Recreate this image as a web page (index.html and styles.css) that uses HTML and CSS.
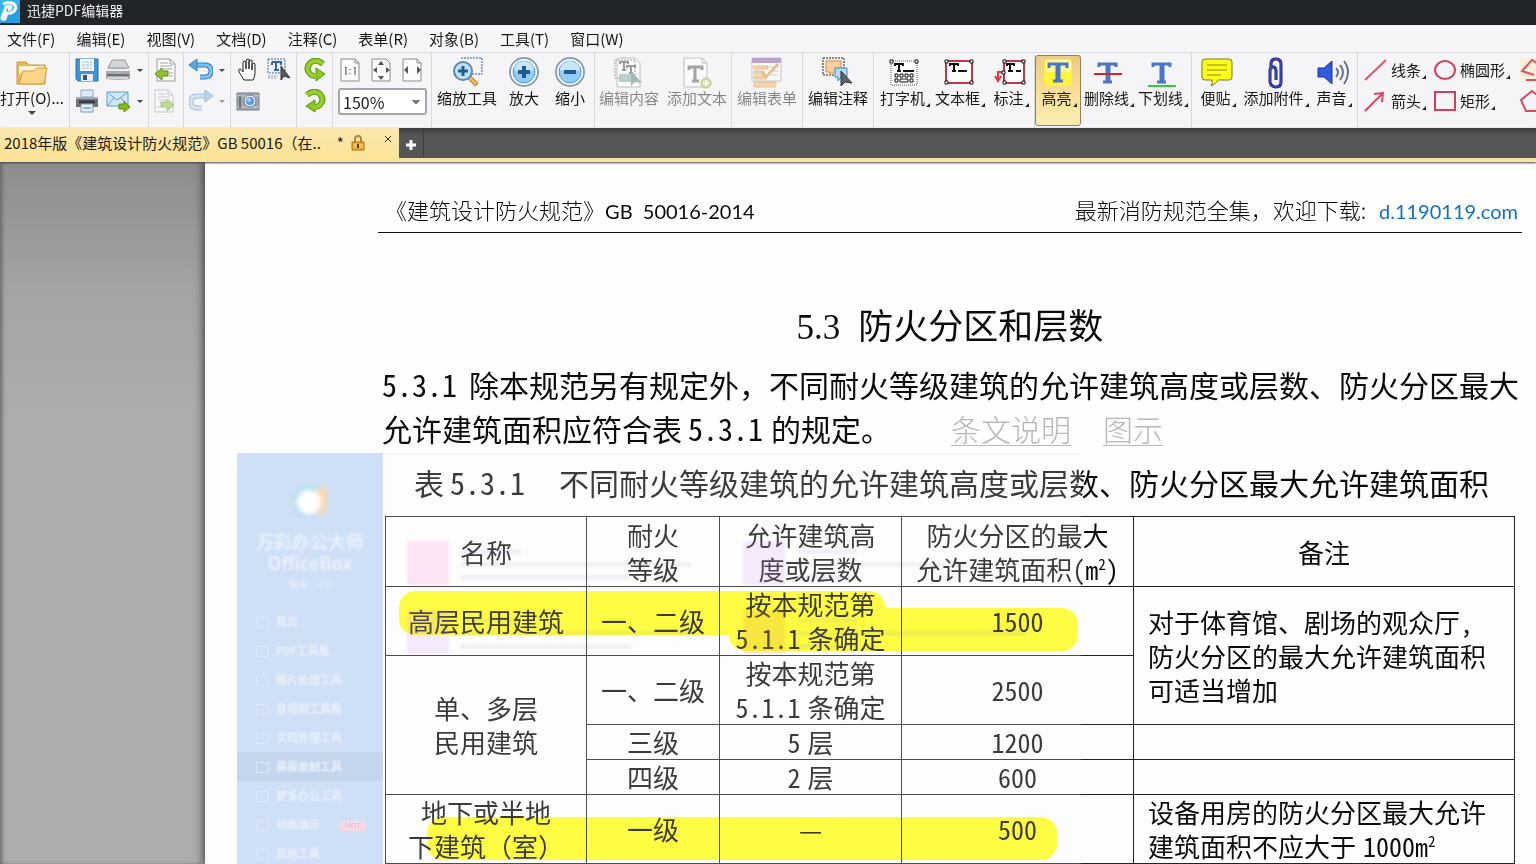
FILE: index.html
```html
<!DOCTYPE html>
<html lang="zh-CN">
<head>
<meta charset="utf-8">
<title>迅捷PDF编辑器</title>
<link rel="stylesheet" href="styles.css">
</head>
<body>
<header class="titlebar">
  <svg class="logo" viewBox="0 0 20 23"><rect width="20" height="23" fill="#35b4ee"/><path d="M0 23L20 3V23Z" fill="#249fe0"/><path d="M3 4Q9 1 14 4Q18 8 13 12Q10 14 7 13L5 19Q3 20 2 18L6 7Q10 5 11 7Q11 9 8 10" fill="none" stroke="#fff" stroke-width="3" stroke-linejoin="round"/></svg>
  <span>迅捷PDF编辑器</span>
</header>
<nav class="menubar">
  <button>文件(F)</button><button>编辑(E)</button><button>视图(V)</button><button>文档(D)</button><button>注释(C)</button><button>表单(R)</button><button>对象(B)</button><button>工具(T)</button><button>窗口(W)</button>
</nav>

<div class="toolbar">
  <div class="group g-open">
    <button class="tool">
      <svg class="icon" viewBox="0 0 32 32"><path d="M1 5h9l3 3h16v19H1z" fill="#e9b95c" stroke="#c99436"/><path d="M3 9h25v8H3z" fill="#fff3cf"/><path d="M3 27L7 14h11l3-3h10l-3 16z" fill="#fbd587" stroke="#cf9c42"/></svg>
      <span>打开(O)...</span><i class="drop"></i>
    </button>
  </div>
  <div class="group g-file">
    <button class="mini" aria-label="保存"><svg viewBox="0 0 24 24"><path d="M1 1h22v22H3l-2-2z" fill="#3d95d8" stroke="#2a72ae"/><path d="M5 1h14v12H5z" fill="#f4f9fd"/><path d="M7 4h10M7 7h10M7 10h10" stroke="#9db4c7" stroke-dasharray="3 1"/><path d="M6 16h12v7H6z" fill="#e6edf3"/><path d="M8 17h4v5H8z" fill="#3a556e"/></svg></button>
    <button class="mini" aria-label="扫描"><svg viewBox="0 0 24 24"><path d="M6 2h13l4 8H2z" fill="#d4d5d8" stroke="#96989c"/><path d="M0 11q12-3 24 0v10q-12 2-24 0z" fill="#a9abb0"/><path d="M0 12h24" stroke="#eee" stroke-width="2"/><path d="M1 17h22" stroke="#6c6e73" stroke-width="2"/><path d="M2 20h20" stroke="#d7d7d9" stroke-width="2"/></svg></button><i class="drop"></i>
    <button class="mini" aria-label="打印"><svg viewBox="0 0 24 24"><path d="M6 1h12v7H6z" fill="#d9edfb" stroke="#8fa4b5"/><path d="M1 8h22v10H1z" fill="#70747c"/><path d="M1 9h22" stroke="#a6abb2" stroke-width="2"/><path d="M4 13h16" stroke="#373a40" stroke-width="3"/><path d="M6 15h12v8H6z" fill="#e6f3fc" stroke="#8295a5"/><path d="M8 19h8" stroke="#79b7e6" stroke-width="2"/></svg></button>
    <button class="mini" aria-label="发送邮件"><svg viewBox="0 0 24 24"><path d="M1 3h21v14H1z" fill="#cfe8fb" stroke="#5c9fd4"/><path d="M1 3l10 8L22 3M1 17l7-8M22 17l-7-8" fill="none" stroke="#5c9fd4"/><path d="M13 15h5v-3l6 6-6 5v-3h-5z" fill="#84bc1c" stroke="#5c8c0c"/></svg></button><i class="drop"></i>
  </div>
  <div class="group g-pages">
    <button class="mini" aria-label="上一页"><svg viewBox="0 0 24 24"><path d="M4 1h13l5 5v17H4z" fill="#fafafa" stroke="#9c9c9c"/><path d="M17 1v5h5" fill="none" stroke="#9c9c9c"/><path d="M7 5h8M7 8h12M7 11h12M16 15h4M16 18h4" stroke="#a5a5a5"/><path d="M15 13v5H9v4l-7-6 7-6v3z" fill="#8fc42a" stroke="#5d8f10"/></svg></button>
    <button class="mini off" aria-label="下一页"><svg viewBox="0 0 24 24"><path d="M2 1h13l5 5v17H2z" fill="#fafafa" stroke="#9c9c9c"/><path d="M15 1v5h5" fill="none" stroke="#9c9c9c"/><path d="M5 5h8M5 8h12M5 11h8M4 18h4" stroke="#a5a5a5"/><path d="M8 13v5h6v4l7-6-7-6v3z" fill="#8fc42a" stroke="#5d8f10"/></svg></button>
  </div>
  <div class="group g-undo">
    <button class="mini" aria-label="撤销"><svg viewBox="0 0 24 24"><path d="M7 7h9q6 0 6 6t-6 6h-5" fill="none" stroke="#2f7fc4" stroke-width="5"/><path d="M7 7h9q6 0 6 6t-6 6h-5" fill="none" stroke="#7fc0f0" stroke-width="3"/><path d="M0 7l8-6v12z" fill="#5aa9e4" stroke="#2f7fc4"/></svg></button><i class="drop"></i>
    <button class="mini off" aria-label="重做"><svg viewBox="0 0 24 24"><path d="M17 7H8q-6 0-6 6t6 6h5" fill="none" stroke="#4d86b5" stroke-width="5"/><path d="M17 7H8q-6 0-6 6t6 6h5" fill="none" stroke="#b8d7ee" stroke-width="3"/><path d="M24 7l-8-6v12z" fill="#88b5d8" stroke="#4d86b5"/></svg></button><i class="drop off"></i>
  </div>
  <div class="group g-hand">
    <button class="mini" aria-label="手形工具"><svg viewBox="0 0 24 24"><path d="M8 22Q6 18 3 14Q2 11 4 11Q5 11 7 14V5Q7 3 8 3T10 5V11V3Q10 1 12 1T13 3V11V4Q13 2 15 2T16 4V12V7Q17 5 18 5T19 7V15Q19 19 17 22Z" fill="#fff" stroke="#222"/></svg></button>
    <button class="mini" aria-label="选择文本"><svg viewBox="0 0 24 24"><path d="M1 1h17v14H1z" fill="none" stroke="#3b6aa8" stroke-dasharray="2 1"/><path d="M5 4h9v3M9 4v8M7 12h5M5 4v3" stroke="#2968b0" stroke-width="2" fill="none"/><path d="M1 18h10M1 20h8" stroke="#999" stroke-dasharray="2 1"/><path d="M14 8v14l3-4 6 2z" fill="#555c64" stroke="#333"/></svg></button>
    <button class="mini" aria-label="快照"><svg viewBox="0 0 24 24"><path d="M1 4h22v17H1z" fill="#a2a6ad" stroke="#777b83"/><path d="M1 7h22M1 18h22" stroke="#cfd2d7"/><path d="M4 7v12" stroke="#6d727a" stroke-width="2"/><circle cx="14" cy="12" r="6" fill="#deebf7" stroke="#637f9c"/><circle cx="14" cy="12" r="4" fill="#5a98db"/><circle cx="13" cy="11" r="2" fill="#a6d0fa"/></svg></button>
  </div>
  <div class="group g-rotate">
    <button class="mini" aria-label="逆时针旋转"><svg viewBox="0 0 24 24"><path d="M20 6Q13 0 7 5Q2 11 7 16Q9 18 12 18" fill="none" stroke="#5e9410" stroke-width="6"/><path d="M13 10v13l9-7z" fill="#8ac71f" stroke="#5e9410"/><path d="M20 6Q13 0 7 5Q2 11 7 16Q9 18 13 18" fill="none" stroke="#97cf2c" stroke-width="4"/></svg></button>
    <button class="mini" aria-label="顺时针旋转"><svg viewBox="0 0 24 24"><path d="M4 6Q11 0 17 5Q22 11 17 16Q15 18 12 18" fill="none" stroke="#5e9410" stroke-width="6"/><path d="M12 11v12L3 17z" fill="#8ac71f" stroke="#5e9410"/><path d="M4 6Q11 0 17 5Q22 11 17 16Q15 18 11 18" fill="none" stroke="#97cf2c" stroke-width="4"/></svg></button>
  </div>
  <div class="group g-zoom">
    <div class="row">
      <button class="mini" aria-label="实际大小"><svg viewBox="0 0 24 24"><path d="M3 1h14l4 4v18H3z" fill="#fbfbfb" stroke="#8c8c8c"/><path d="M17 1v4h4" fill="none" stroke="#8c8c8c"/><path d="M7 10l1-1v8M16 10l1-1v8M12 11v1M12 15v1" fill="none" stroke="#444"/></svg></button>
      <button class="mini" aria-label="适合页面"><svg viewBox="0 0 24 24"><path d="M3 1h14l4 4v18H3z" fill="#fbfbfb" stroke="#8c8c8c"/><path d="M12 3l3 4H9zM12 22l3-4H9zM4 12l4-3v6zM21 12l-4-3v6z" fill="#555"/></svg></button>
      <button class="mini" aria-label="适合宽度"><svg viewBox="0 0 24 24"><path d="M3 1h14l4 4v18H3z" fill="#fbfbfb" stroke="#8c8c8c"/><path d="M17 1v4h4" fill="none" stroke="#8c8c8c"/><path d="M4 12l4-4v8zM21 12l-4-4v8z" fill="#555"/></svg></button>
    </div>
    <select class="zoom" aria-label="缩放比例"><option>150%</option><option>100%</option></select>
  </div>
  <div class="group">
    <button class="tool w70"><svg class="icon" viewBox="0 0 32 32"><path d="M10 1h21v16H20" fill="none" stroke="#4254b8" stroke-dasharray="2 1"/><path d="M18 20l8 8" stroke="#d58a2b" stroke-width="5"/><path d="M18 20l7 7" stroke="#fbc36a" stroke-width="2"/><circle cx="12" cy="14" r="9" fill="#bfe1fa" stroke="#5b86ae" stroke-width="2"/><path d="M12 9v10M7 14h10" stroke="#1f5c94" stroke-width="3"/></svg><span>缩放工具</span></button>
    <button class="tool w44"><svg class="icon" viewBox="0 0 32 32"><circle cx="16" cy="15" r="14" fill="#fff" stroke="#8aa0b5" stroke-width="2"/><circle cx="16" cy="15" r="11" fill="#8fcbf6" stroke="#5596cd"/><path d="M6 13a10 9 0 0 1 20 0q-10 4-20 0" fill="#c7e6fc"/><path d="M16 9v12M10 15h12" stroke="#22598d" stroke-width="4"/></svg><span>放大</span></button>
    <button class="tool w48"><svg class="icon" viewBox="0 0 32 32"><circle cx="16" cy="15" r="14" fill="#fff" stroke="#8aa0b5" stroke-width="2"/><circle cx="16" cy="15" r="11" fill="#8fcbf6" stroke="#5596cd"/><path d="M6 13a10 9 0 0 1 20 0q-10 4-20 0" fill="#c7e6fc"/><path d="M10 15h12" stroke="#22598d" stroke-width="4"/></svg><span>缩小</span></button>
  </div>
  <div class="group">
    <button class="tool w68 off" disabled><svg class="icon" viewBox="0 0 32 32"><path d="M4 1h18l5 5v24H4z" fill="#fff" stroke="#888"/><path d="M2 3h20v18H2z" fill="none" stroke="#555" stroke-dasharray="2 1"/><path d="M7 7V5h8v2M11 5v8M9 13h4M14 11V9h8v2M18 9v7M16 16h4" fill="none" stroke="#444" stroke-width="2"/><path d="M6 17h14v8H6z" fill="#79a8a1"/><path d="M18 14v15l4-4 7 1z" fill="#4f7d78"/></svg><span>编辑内容</span></button>
    <button class="tool w68 off" disabled><svg class="icon" viewBox="0 0 32 32"><path d="M3 1h18l5 5v24H3z" fill="#fff" stroke="#888"/><path d="M21 1v5h5" fill="none" stroke="#888"/><path d="M8 13v-3h13v3M14 10v14M11 24h7" fill="none" stroke="#555" stroke-width="3"/><circle cx="25" cy="26" r="5" fill="#b6cf58" stroke="#7c9924"/><path d="M25 23v6M22 26h6" stroke="#fff" stroke-width="2"/></svg><span>添加文本</span></button>
  </div>
  <div class="group">
    <button class="tool w70 off" disabled><svg class="icon" viewBox="0 0 32 32"><path d="M1 1h29v23H1z" fill="#fff" stroke="#978aa5"/><path d="M1 1h29v5H1z" fill="#80539c"/><path d="M3 9h14v3H3zM3 14h10v3H3zM3 19h12v3H3zM3 25h22v5H3z" fill="#f0b760" stroke="#d18f35"/><path d="M18 10h10M20 14h8M20 18h8" stroke="#aaa"/><path d="M11 15l4 5L27 7" fill="none" stroke="#d28a35" stroke-width="3"/></svg><span>编辑表单</span></button>
  </div>
  <div class="group">
    <button class="tool w70"><svg class="icon" viewBox="0 0 32 32"><path d="M1 1h21v17H1z" fill="none" stroke="#222" stroke-dasharray="2 1"/><path d="M4 4h15v11h-7l-4 3v-3H4z" fill="#fbd0a0" stroke="#d98a3c"/><path d="M13 11h12v9h-6l-3 4v-4h-3z" fill="#b5dcfa" stroke="#3f86c4"/><path d="M19 14v15l4-4 7 1z" fill="#56656a" stroke="#333"/></svg><span>编辑注释</span></button>
  </div>
  <div class="group g-mark">
    <button class="tool w56"><svg class="icon" viewBox="0 0 32 32"><path d="M3 4h26v24H3z" fill="#fff" stroke="#555" stroke-dasharray="1 1"/><path d="M7 9V7h8v2M11 7v7M9 14h4" fill="none" stroke="#111" stroke-width="2"/><path d="M15 14h11" stroke="#111" stroke-width="2"/><path d="M7 17h3v3H7zM12 17h3v3h-3zM17 17h3v3h-3zM22 17h3v3h-3zM7 22h3v3H7zM12 22h8v3h-8zM22 22h3v3h-3z" fill="none" stroke="#111"/><path d="M2 3h3v3H2zM27 3h3v3h-3z" fill="#fff" stroke="#111"/></svg><span class="more">打字机</span></button>
    <button class="tool w54"><svg class="icon" viewBox="0 0 32 32"><path d="M3 4h26v22H3z" fill="#fff" stroke="#c33645" stroke-width="2"/><path d="M7 9V7h8v2M11 7v7M9 14h4M15 14h9" fill="none" stroke="#111" stroke-width="2"/><path d="M2 3h3v3H2zM27 3h3v3h-3zM2 24h3v3H2zM27 24h3v3h-3z" fill="#fff" stroke="#111"/></svg><span class="more">文本框</span></button>
    <button class="tool w48"><svg class="icon" viewBox="0 0 32 32"><path d="M10 4h20v22H10z" fill="#fff" stroke="#c33645" stroke-width="2"/><path d="M13 9V7h7v2M16 7v7M14 14h5M22 14h5" fill="none" stroke="#111" stroke-width="2"/><path d="M9 15H4v8M1 19l3 5 3-5" fill="none" stroke="#e23644" stroke-width="2"/><path d="M9 3h3v3H9zM28 3h3v3h-3zM9 24h3v3H9zM28 24h3v3h-3zM8 14h3v3H8z" fill="#fff" stroke="#111"/></svg><span class="more">标注</span></button>
  </div>
  <div class="group g-lines">
    <button class="tool w46 active" aria-pressed="true"><svg class="icon" viewBox="0 0 32 32"><rect x="2" y="2" width="28" height="27" rx="4" fill="#fff33b"/><rect x="3" y="3" width="26" height="12" rx="4" fill="#fff8a0"/><path d="M7 11V7h18v4M11 24h10" fill="none" stroke="#4875c4" stroke-width="3"/><path d="M16 7v17" stroke="#4875c4" stroke-width="5"/></svg><span class="more">高亮</span></button>
    <button class="tool w54"><svg class="icon" viewBox="0 0 32 32"><path d="M7 10V7h17v3M11 25h9" fill="none" stroke="#4a76c8" stroke-width="3"/><path d="M16 7v18" stroke="#4a76c8" stroke-width="5"/><path d="M2 17h28" stroke="#e31d24" stroke-width="2"/></svg><span class="more">删除线</span></button>
    <button class="tool w54"><svg class="icon" viewBox="0 0 32 32"><path d="M7 10V7h17v3M11 25h9" fill="none" stroke="#4a76c8" stroke-width="3"/><path d="M16 7v18" stroke="#4a76c8" stroke-width="5"/><path d="M2 29h28" stroke="#33cc3c" stroke-width="2"/></svg><span class="more">下划线</span></button>
  </div>
  <div class="group g-notes">
    <button class="tool w48"><svg class="icon" viewBox="0 0 32 32"><path d="M4 2h24q3 0 3 3v15q0 3-3 3H17q-2 4-7 6 2-3 1-6H4q-3 0-3-3V5q0-3 3-3z" fill="#ffff1c" stroke="#77771a"/><path d="M6 8h20M6 13h20M6 18h14" stroke="#88881b"/></svg><span class="more">便贴</span></button>
    <button class="tool w68"><svg class="icon" viewBox="0 0 32 32"><path d="M12 12V7q0-5 5-5t5 5v18q0 5-5 5t-6-5V14q0-4 3-4t3 4v9" fill="none" stroke="#1b237e" stroke-width="3"/><path d="M12 12V7q0-5 5-5t5 5v18q0 5-5 5t-6-5V14q0-4 3-4t3 4v9" fill="none" stroke="#4960d6"/></svg><span class="more">添加附件</span></button>
    <button class="tool w48"><svg class="icon" viewBox="0 0 32 32"><path d="M1 11h6l8-7v23l-8-7H1z" fill="#2e5be0" stroke="#1f3390"/><path d="M19 11q4 4 0 9M23 8q6 7 0 15M27 4q8 11 0 23" fill="none" stroke="#667089" stroke-width="2"/></svg><span class="more">声音</span></button>
  </div>
  <div class="group g-shapes">
    <button class="shape"><svg viewBox="0 0 24 24"><path d="M1 22L22 2" stroke="#e0546a" stroke-width="2"/></svg><span class="more">线条</span></button>
    <button class="shape"><svg viewBox="0 0 24 24"><ellipse cx="12" cy="12" rx="10" ry="9" fill="none" stroke="#d43f57" stroke-width="2"/></svg><span class="more">椭圆形</span></button>
    <button class="shape" aria-label="折线"><svg class="warm" viewBox="0 0 24 24"><path d="M14 17L2 13L12 2L23 9M6 22h18" fill="none" stroke="#d9535e" stroke-width="2"/></svg></button>
    <button class="shape"><svg viewBox="0 0 24 24"><path d="M1 22L18 5M10 5l9-1-1 9" fill="none" stroke="#d94a60" stroke-width="2"/></svg><span class="more">箭头</span></button>
    <button class="shape"><svg viewBox="0 0 24 24"><path d="M2 3h20v18H2z" fill="none" stroke="#d43f57" stroke-width="2"/></svg><span class="more">矩形</span></button>
    <button class="shape" aria-label="多边形"><svg viewBox="0 0 24 24"><path d="M12 2l11 8-4 12H6L1 11z" fill="none" stroke="#d94a60" stroke-width="2"/></svg></button>
  </div>
</div>

<div class="tabs">
  <div class="tab">
    <span class="tab-name">2018年版《建筑设计防火规范》GB 50016（在..</span><span class="star">*</span>
    <svg class="lock" viewBox="0 0 14 16"><path d="M4 8V4q0-3 3-3t3 3v4" fill="none" stroke="#a68945" stroke-width="2"/><path d="M1 7h12v8H1z" fill="#e9a92f" stroke="#a87115"/><path d="M2 10h10M2 12h10" stroke="#fbd16d"/><path d="M7 9v4" stroke="#5b3c08" stroke-width="2"/></svg>
    <button class="close" aria-label="关闭"><svg viewBox="0 0 8 8"><path d="M1 1l6 6M7 1L1 7" stroke="#333"/></svg></button>
  </div>
  <button class="add" aria-label="新建标签"><svg viewBox="0 0 10 10"><path d="M5 0v10M0 5h10" stroke="#fff" stroke-width="3"/></svg></button>
</div>

<main class="workspace">
  <article class="page">
    <div class="page-head"><span>《建筑设计防火规范》<b>GB&nbsp; 50016-2014</b></span><span>最新消防规范全集，欢迎下载: <a href="#">d.1190119.com</a></span></div>
    <h1><span class="num">5.3</span>防火分区和层数</h1>
    <p><span class="clause">5.3.1</span>除本规范另有规定外，不同耐火等级建筑的允许建筑高度或层数、防火分区最大<br>允许建筑面积应符合表<span class="ref">5.3.1</span>的规定。<a class="note" href="#">条文说明</a><a class="note fig" href="#">图示</a></p>
    <div class="sheet">
      <table>
        <caption>表<span class="ref">5.3.1</span><span class="cap">不同耐火等级建筑的允许建筑高度或层数、防火分区最大允许建筑面积</span></caption>
        <colgroup><col class="c1"><col class="c2"><col class="c3"><col class="c4"><col></colgroup>
        <tr><th>名称</th><th>耐火<br>等级</th><th>允许建筑高<br>度或层数</th><th>防火分区的最大<br>允许建筑面积(m<sup>2</sup>)</th><th>备注</th></tr>
        <tr><td>高层民用建筑</td><td>一、二级</td><td>按本规范第<br>5.1.1<span class="gap">条确定</span></td><td>1500</td><td rowspan="2" class="remark">对于体育馆、剧场的观众厅，<br>防火分区的最大允许建筑面积<br>可适当增加</td></tr>
        <tr><td rowspan="3">单、多层<br>民用建筑</td><td>一、二级</td><td>按本规范第<br>5.1.1<span class="gap">条确定</span></td><td>2500</td></tr>
        <tr><td>三级</td><td>5<span class="gap">层</span></td><td>1200</td><td></td></tr>
        <tr><td>四级</td><td>2<span class="gap">层</span></td><td>600</td><td></td></tr>
        <tr><td class="full">地下或半地<br>下建筑（室）</td><td>一级</td><td>—</td><td>500</td><td class="remark">设备用房的防火分区最大允许<br>建筑面积不应大于<span class="gap">1000m<sup>2</sup></span></td></tr>
      </table>
      <div class="marks"><i class="mark m1"></i><i class="mark m2"></i><i class="mark m3"></i></div>
    </div>
    <aside class="ghost">
      <div class="ghost-side">
        <svg class="ghost-logo" viewBox="0 0 44 44"><path d="M6 14Q14 2 28 6L34 18 16 38 6 30z" fill="#b4e3ea"/><path d="M28 8l11-1v24l-9 5z" fill="#f9d8b4"/><circle cx="21" cy="22" r="12" fill="#fff"/></svg>
        <strong>万彩办公大师<br>OfficeBox</strong><small>版本：2.0</small>
        <ul><li>首页</li><li>PDF工具集</li><li>图片处理工具</li><li>音视频工具集</li><li>文档处理工具</li><li class="on">屏幕录制工具</li><li>更多办公工具</li><li>动画演示<em>HOT</em></li><li>其他工具</li></ul>
      </div>
      <div class="ghost-body">
        <div class="card"><i class="tile pink"></i><div><i class="bar short"></i><i class="bar"></i><i class="bar mid"></i></div></div>
        <div class="card"><i class="tile violet"></i><div><i class="bar short"></i><i class="bar mid"></i><i class="bar short"></i></div></div>
        <div class="card"><i class="tile violet"></i><div><i class="bar short"></i><i class="bar"></i><i class="bar mid"></i></div></div>
        <div class="card"><i class="tile amber"></i><div><i class="bar short"></i><i class="bar"></i><i class="bar short"></i></div></div>
      </div>
    </aside>
  </article>
</main>
</body>
</html>
```
FILE: styles.css
```css
* { box-sizing: border-box; }
body {
  margin: 0; height: 100vh; overflow: hidden;
  display: flex; flex-direction: column;
  font: 15px/20px "Noto Sans CJK SC", sans-serif; color: #161616; background: #f5f5f8;
}
button { font: inherit; color: inherit; border: 0; background: none; padding: 0; }
svg { display: block; }
ul { list-style: none; margin: 0; padding: 0; }

.titlebar { flex: none; height: 25px; display: flex; gap: 7px; background: #212429; color: #eee; font-size: 14px; line-height: 20px; }
.logo { width: 20px; height: 23px; }
.menubar { flex: none; height: 28px; display: flex; align-items: center; gap: 21px; padding-left: 7px; background: #f6f5f8; border-bottom: 1px solid #dcdde0; white-space: nowrap; }

.toolbar { flex: none; height: 75px; display: flex; background: #f5f5f8; overflow: hidden; white-space: nowrap; }
.group { flex: none; display: flex; align-items: flex-start; padding-top: 2px; border-right: 1px solid #d9dade; }
.tool { height: 71px; padding-top: 2px; display: flex; flex-direction: column; align-items: center; flex: none; }
.tool span { line-height: 20px; margin-top: -1px; }
.icon { width: 32px; height: 32px; flex: none; }
.w44 { width: 44px; } .w46 { width: 46px; } .w48 { width: 48px; } .w54 { width: 54px; }
.w56 { width: 56px; } .w68 { width: 68px; } .w70 { width: 70px; }
.off { opacity: .5; }
.active { padding-top: 1px; border: 1px solid #94815a; border-radius: 3px; background: linear-gradient(#eccb83, #fadf97 55%, #f9edb5); }
.more { position: relative; padding-right: 3px; }
.more::after { content: ""; position: absolute; right: -2px; bottom: 1px; border-left: 4px solid transparent; border-bottom: 4px solid #222; }
.drop { width: 0; height: 0; border: 3px solid transparent; border-top: 3px solid #444; border-bottom: 0; }
.mini { width: 24px; height: 24px; flex: none; }
.mini svg { width: 24px; height: 24px; }

.g-open { width: 70px; justify-content: center; padding-right: 5px; }
.g-open .drop { margin-top: 3px; border-width: 4px 4px 0; }
.g-file { width: 79px; display: grid; grid-template-columns: 24px 24px 6px; gap: 7px 7px; padding: 5px 0 0 5px; align-items: center; align-content: start; }
.g-pages, .g-rotate { flex-direction: column; gap: 7px; width: 35px; padding: 5px 0 0 4px; }
.g-undo { width: 47px; display: grid; grid-template-columns: 24px 6px; gap: 7px 6px; padding: 5px 0 0 5px; align-items: center; align-content: start; }
.g-hand { width: 66px; display: grid; grid-template-columns: 24px 24px; gap: 7px 7px; padding: 5px 0 0 5px; align-content: start; }
.g-rotate { width: 36px; padding-left: 6px; }
.g-zoom { width: 99px; flex-direction: column; gap: 6px; padding: 5px 4px 0 5px; }
.row { display: flex; gap: 7px; }
.zoom {
  width: 100%; height: 27px; padding: 0 3px; appearance: none;
  border: 2px solid #a4a7ad; border-radius: 3px;
  font: 16px/20px "Noto Sans CJK SC", sans-serif; color: #222;
  background:
    linear-gradient(to bottom right, #777 50%, transparent 51%) right 5px center / 4px 4px no-repeat,
    linear-gradient(to bottom left, #777 50%, transparent 51%) right 9px center / 4px 4px no-repeat,
    #fff;
}
.g-mark { width: 161px; padding-left: 2px; }
.g-lines { padding-right: 2px; }
.g-notes { padding-left: 1px; }
.g-shapes { flex: 1; overflow: hidden; border-right: 0; display: grid; grid-template-columns: 62px 80px 24px; grid-auto-rows: 31px; gap: 0 7px; padding: 1px 0 0 6px; }
.shape { display: flex; align-items: center; gap: 3px; height: 31px; }
.shape svg { width: 24px; height: 24px; flex: none; }
.shape .warm { background: #fbeedd; }

.tabs { flex: none; height: 34px; display: flex; background: linear-gradient(#3f3f40, #565657 8px); border-bottom: 4px solid #fae3a6; box-shadow: 0 1px 2px #444; z-index: 1; }
.tab { width: 399px; flex: none; display: flex; align-items: center; padding: 0 7px 4px 4px; background: linear-gradient(#fbe7b0, #fde394); height: 34px; line-height: 30px; color: #1e1708; white-space: nowrap; }
.star { margin-left: 16px; margin-right: 7px; }
.lock { width: 14px; height: 16px; }
.close { margin-left: auto; padding-bottom: 8px; }
.close svg { width: 8px; height: 8px; }
.add { width: 25px; height: 30px; padding-top: 4px; display: grid; place-items: center; border-right: 1px solid #3c3c3d; }
.add svg { width: 10px; height: 10px; }

.workspace { flex: 1; min-height: 0; overflow: hidden; padding-left: 205px; margin-top: -1px; background: linear-gradient(#8d8d8c, #a4a4a2 130px, #adadab 260px, #adadab); box-shadow: inset 3px 0 4px -1px #666; }
.page { position: relative; min-height: 100%; padding: 0 14px 0 173px; background: #fefefe; box-shadow: 0 0 9px 1px #333; color: #0c0c0c; white-space: nowrap; }
.page-head { display: flex; justify-content: space-between; padding: 33px 4px 6px 7px; font: 300 22px/30px "Noto Sans CJK SC", sans-serif; border-bottom: 1px solid #111; }
.page-head b, .page-head a { font: 20px/30px Lato, "Open Sans", sans-serif; }
.page-head a { color: #1670c0; text-decoration: none; margin-left: 8px; }
h1 { margin: 66px 0 0; text-align: center; font: 400 35px/50px "Noto Sans CJK SC", sans-serif; }
.num { font-family: "Liberation Serif", serif; margin-right: 18px; }
p { margin: 9px 0 0; padding-left: 4px; font-size: 30px; line-height: 44px; }
.clause, .ref, table { font-feature-settings: "hwid"; }
.clause { margin-right: 12px; }
.ref { margin: 0 8px 0 6px; }
.note { font-weight: 300; color: #b8b8ba; margin-left: 60px; text-underline-offset: 4px; text-decoration-thickness: 1px; }
.note.fig { margin-left: 32px; }
.sheet { position: relative; margin: 0 7px; }
table { width: 100%; table-layout: fixed; border-collapse: collapse; font-size: 26px; line-height: 34px; text-align: center; }
caption { font-size: 30px; line-height: 64px; text-align: left; padding: 0 0 2px 29px; }
.cap { margin-left: 26px; }
th, td { height: 35px; padding: 0; border: 1px solid #222; font-weight: 400; }
th { height: 70px; }
.c1 { width: 201px; } .c2 { width: 133px; } .c3 { width: 182px; } .c4 { width: 232px; }
.remark { text-align: left; padding-left: 14px; }
.full { font-feature-settings: normal; }
.gap { margin-left: 7px; }
sup { font-size: 15px; line-height: 0; vertical-align: 10px; }
.marks { position: absolute; inset: 0; mix-blend-mode: multiply; }
.mark { position: absolute; background: #ffff14; border-radius: 16px; }
.m1 { left: 14px; top: 141px; width: 486px; height: 44px; }
.m2 { left: 344px; top: 158px; width: 349px; height: 43px; }
.m3 { left: 42px; top: 367px; width: 630px; height: 43px; }

.ghost { position: absolute; left: 32px; top: 292px; width: 844px; height: 420px; display: flex; pointer-events: none; }
.ghost-side { width: 146px; background: #cfdff6; color: #f2f8ff; text-align: center; font-size: 18px; line-height: 21px; padding-top: 27px; }
.ghost-side strong, .ghost-side small { display: block; opacity: .75; filter: blur(1px); }
.ghost-side small { font-size: 10px; line-height: 14px; margin-top: 4px; }
.ghost-logo { width: 44px; height: 44px; margin: 0 auto 7px; filter: blur(2px); }
.ghost-side ul { margin-top: 16px; text-align: left; font-size: 11px; line-height: 29px; }
.ghost-side li { position: relative; padding-left: 39px; text-shadow: 0 0 2px #fff; color: #dfeafa; }
.ghost-side li::before { content: ""; position: absolute; left: 19px; top: 10px; width: 11px; height: 9px; border: 1px solid #dbe8fa; }
.ghost-side .on { background: #c5d5eb; }
.ghost-side em { margin-left: 20px; padding: 0 5px; background: #f5d7e6; color: #f0a8b8; font: 8px/10px Roboto, sans-serif; display: inline-block; vertical-align: middle; }
.ghost-body { flex: 1; display: grid; grid-template-columns: 336px 1fr; grid-auto-rows: 46px; gap: 23px 0; padding: 87px 0 0 24px; background: rgba(253, 252, 255, .2); border-top: 1px solid #f3f1f8; }
.card { display: flex; gap: 12px; filter: blur(1px); }
.tile { width: 42px; height: 44px; }
.pink { background: rgba(245, 130, 215, .2); }
.violet { background: rgba(190, 130, 240, .15); }
.amber { background: rgba(220, 140, 40, .2); }
.bar { display: block; width: 230px; height: 5px; margin-top: 8px; background: rgba(130, 120, 150, .1); }
.mid { width: 170px; }
.short { width: 60px; }
```
